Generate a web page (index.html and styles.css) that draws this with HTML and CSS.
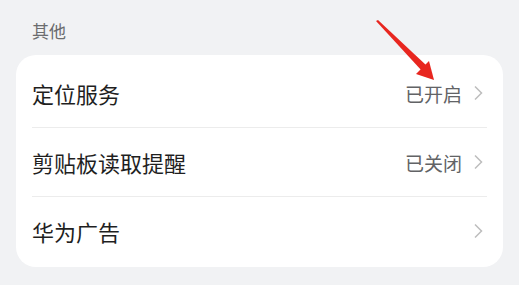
FILE: index.html
```html
<!DOCTYPE html>
<html lang="zh-CN">
<head>
    <meta charset="UTF-8">
    <meta name="viewport" content="width=device-width, initial-scale=1.0">
    <title>其他</title>
    <link rel="stylesheet" href="styles.css">
</head>
<body>
    <div class="page">
        <div class="section-title">其他</div>
        <div class="card">
            <div class="row">
                <span class="label">定位服务</span>
                <span class="value">已开启</span>
                <svg class="chevron" viewBox="0 0 10 16"><path d="M2 1.5 L8.5 8 L2 14.5" /></svg>
            </div>
            <div class="row">
                <span class="label">剪贴板读取提醒</span>
                <span class="value">已关闭</span>
                <svg class="chevron" viewBox="0 0 10 16"><path d="M2 1.5 L8.5 8 L2 14.5" /></svg>
            </div>
            <div class="row">
                <span class="label">华为广告</span>
                <span class="value"></span>
                <svg class="chevron" viewBox="0 0 10 16"><path d="M2 1.5 L8.5 8 L2 14.5" /></svg>
            </div>
        </div>
        <!-- annotation arrow drawn over the screenshot -->
        <svg class="arrow" width="519" height="285" viewBox="0 0 519 285">
            <polygon points="376,21 378,20 427,66 422,71" fill="#e8261f" />
            <polygon points="434,80 416,74 429,61" fill="#e8261f" />
        </svg>
    </div>
</body>
</html>
```

FILE: styles.css
```css
body {
    margin: 0;
    background-color: #f1f2f4;
    font-family: "Noto Sans CJK SC", "Noto Sans", sans-serif;
}
.page {
    position: relative;
    width: 519px;
    height: 285px;
    overflow: hidden;
}
.section-title {
    padding: 21px 0 0 32px;
    height: 55px;
    box-sizing: border-box;
    font-size: 17px;
    line-height: 20px;
    color: #6b6c6e;
}
.card {
    margin: 0 16px;
    background-color: #fff;
    border-radius: 20px;
    padding: 4px 16px 2px 16px;
}
.row {
    display: flex;
    align-items: center;
    height: 68px;
    border-bottom: 1px solid #ececec;
}
.row:last-child {
    border-bottom: none;
}
.label {
    flex: 1;
    font-size: 22px;
    color: #1f1f1f;
}
.value {
    font-size: 19px;
    color: #626366;
    margin-right: 11px;
}
.chevron {
    width: 10px;
    height: 16px;
    margin-right: 4px;
    fill: none;
    stroke: #bdbdbd;
    stroke-width: 1.5;
}
.arrow {
    position: absolute;
    left: 0;
    top: 0;
}
```
